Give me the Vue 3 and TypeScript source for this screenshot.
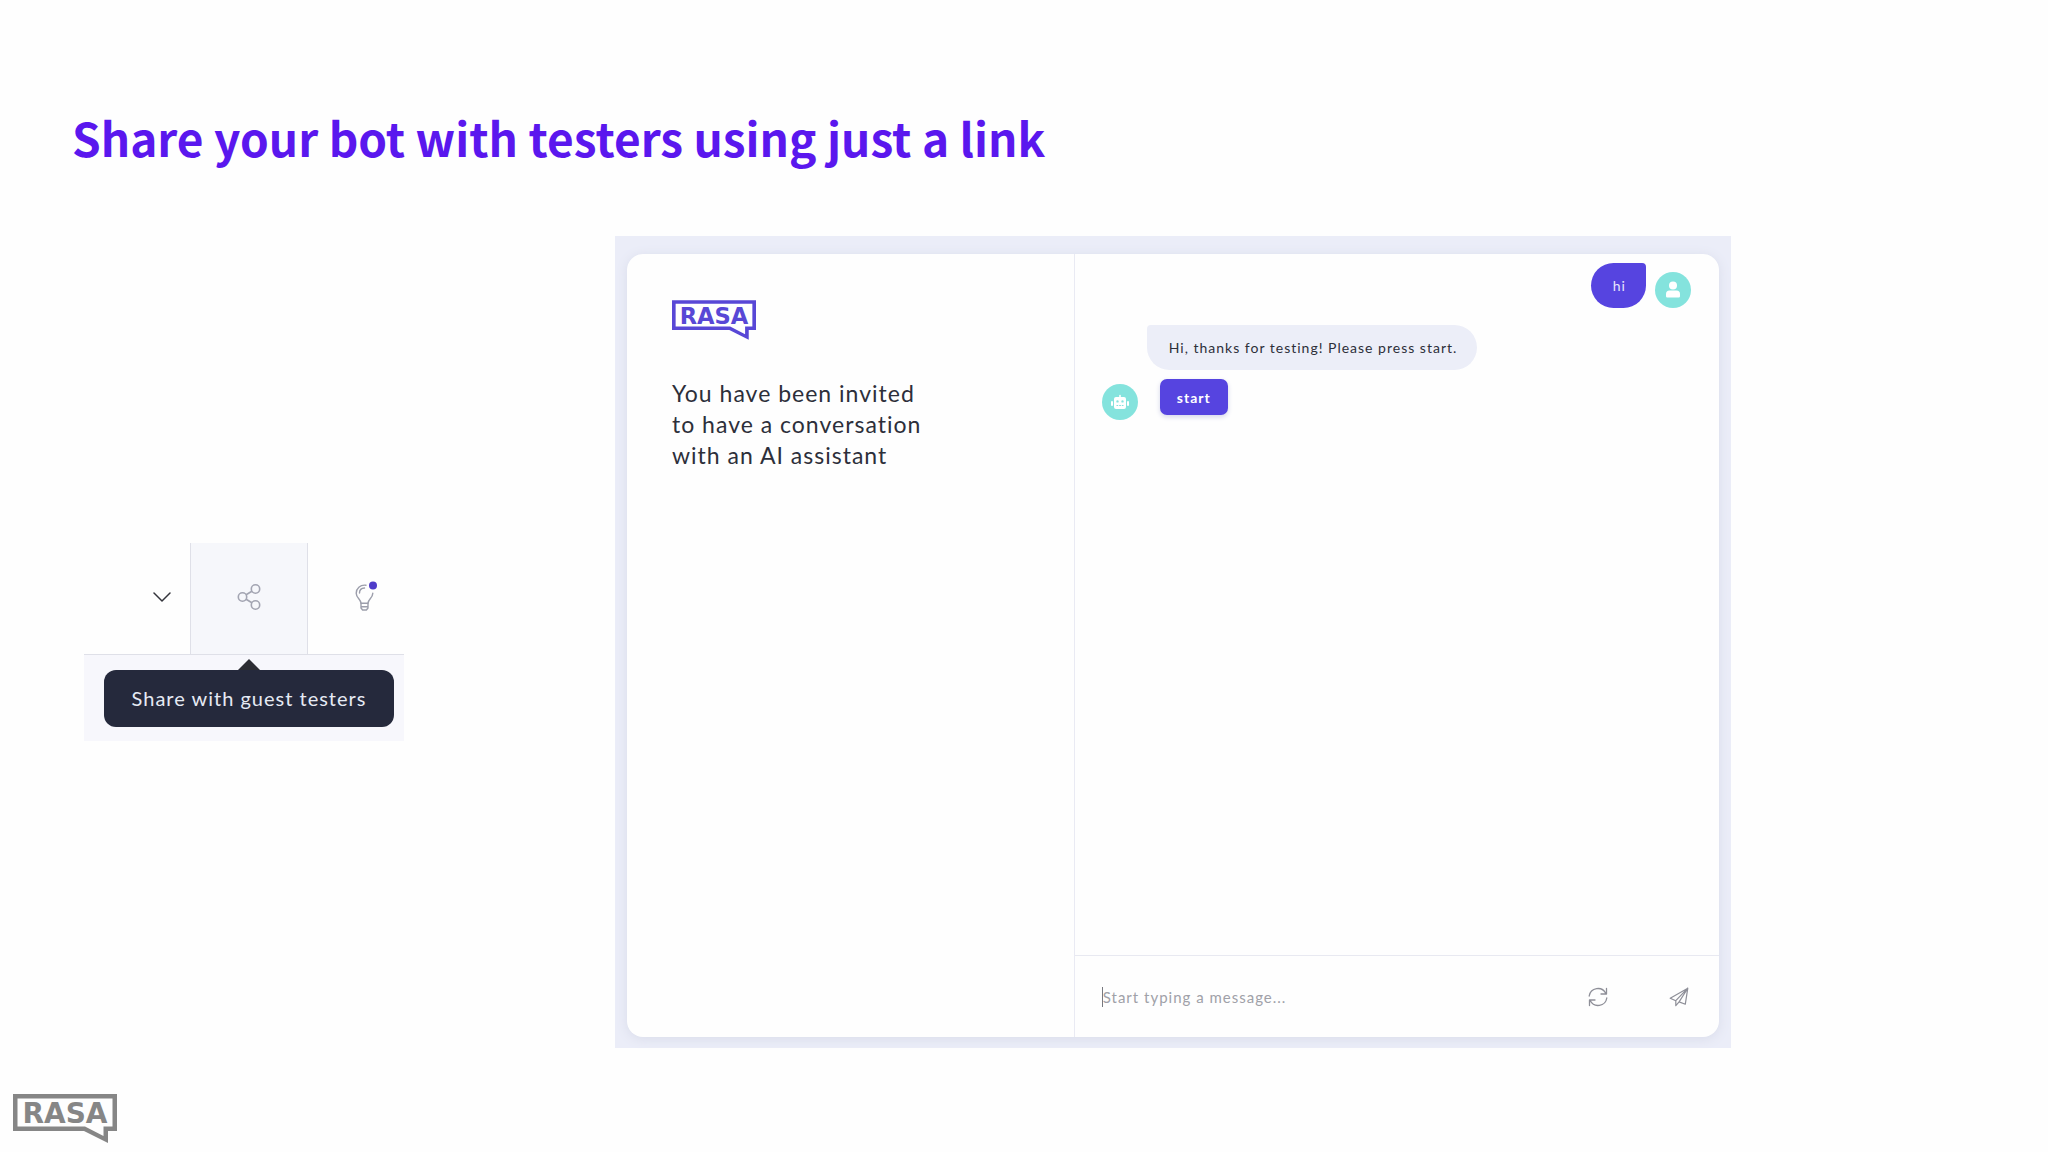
<script setup lang="ts">
import { ref } from 'vue'

interface ChatMessage {
  id: number
  from: 'guest' | 'bot'
  text: string
  replies: string[]
}

const title = 'Share your bot with testers using just a link'
const invitation = ['You have been invited', 'to have a conversation', 'with an AI assistant']
const draft = ref('')

const messages = ref<ChatMessage[]>([
  { id: 1, from: 'guest', text: 'hi', replies: [] },
  { id: 2, from: 'bot', text: 'Hi, thanks for testing! Please press start.', replies: ['start'] },
])
</script>

<template>
  <div class="page">
    <header class="heading">
      <h1>{{ title }}</h1>
    </header>

    <main class="content">
      <section class="toolbar" aria-label="Toolbar">
        <div class="tools">
          <button class="tool tool-more" type="button" aria-label="More">
            <svg width="18" height="10" viewBox="0 0 18 10" fill="none" stroke="#33343b" stroke-width="1.5" stroke-linecap="round" stroke-linejoin="round">
              <path d="M1 1l8 8 8-8" />
            </svg>
          </button>
          <button class="tool tool-share" type="button" aria-label="Share with guest testers">
            <svg width="24" height="28" viewBox="0 0 24 28" fill="none" stroke="#a3a5b2" stroke-width="1.6">
              <circle cx="5.5" cy="14" r="4.2" />
              <circle cx="18.5" cy="6" r="4.2" />
              <circle cx="18.5" cy="22" r="4.2" />
              <path d="M9.1 11.8l5.8-3.6M9.1 16.2l5.8 3.6" />
            </svg>
          </button>
          <button class="tool tool-tips" type="button" aria-label="Tips">
            <svg width="24" height="32" viewBox="0 0 24 32" fill="none" stroke="#9c9eab" stroke-width="1.4" stroke-linecap="round" stroke-linejoin="round">
              <path d="M12 4.200C6 3.500 2.200 7.500 2.200 12.200c0 4.800 4.800 6 4.800 10h7c0-4 4.800-5.200 4.800-10" />
              <path d="M5.500 12c0-2.800 1.800-4.800 5-5" />
              <path d="M7 22.200v4.800l1.600 2h3.800l1.600-2v-4.800M7 25.700h7" />
              <circle cx="19" cy="4.500" r="4" fill="#4f3cc9" stroke="none" />
            </svg>
          </button>
        </div>
        <div class="tip-area">
          <div class="tooltip" role="tooltip">Share with guest testers</div>
        </div>
      </section>

      <section class="preview">
        <div class="card">
          <aside class="intro">
            <svg class="logo" width="84" height="40" viewBox="0 0 104 49" role="img" aria-label="Rasa">
              <path fill-rule="evenodd" d="M0 0H104V37H95V49L71 37H0ZM4.500 4.500V32.500H72L90.500 42V32.500H99.500V4.500Z" />
              <text x="52" y="29" text-anchor="middle">RASA</text>
            </svg>
            <p class="invitation">
              <span v-for="line in invitation" :key="line">{{ line }}</span>
            </p>
          </aside>

          <div class="chat">
            <div class="messages">
              <div v-for="message in messages" :key="message.id" class="message" :class="message.from">
                <span class="avatar">
                  <svg v-if="message.from === 'guest'" width="16" height="18" viewBox="0 0 16 18" fill="#fff">
                    <circle cx="8" cy="4.500" r="4" />
                    <path d="M4.500 9.500h7A3.500 3.500 0 0 1 15 13v2.200a1.300 1.300 0 0 1-1.300 1.300H2.300A1.300 1.300 0 0 1 1 15.200V13a3.500 3.500 0 0 1 3.500-3.500z" />
                  </svg>
                  <svg v-else width="18" height="16" viewBox="0 0 18 16" fill="#fff">
                    <path fill-rule="evenodd" d="M8.200 1.500a.8.800 0 0 1 1.600 0V3H13a2 2 0 0 1 2 2v8a2 2 0 0 1-2 2H5a2 2 0 0 1-2-2V5a2 2 0 0 1 2-2h3.200zM6.500 6.200a1.200 1.200 0 1 0 0 2.400 1.200 1.200 0 0 0 0-2.400zm5 0a1.200 1.200 0 1 0 0 2.400 1.200 1.200 0 0 0 0-2.400zM5.500 11v1h1.700v-1zm2.700 0v1h1.700v-1zm2.600 0v1h1.700v-1z" />
                    <rect x="0" y="7" width="2" height="5" rx="1" />
                    <rect x="16" y="7" width="2" height="5" rx="1" />
                  </svg>
                </span>
                <div class="body">
                  <p class="bubble">{{ message.text }}</p>
                  <button v-for="reply in message.replies" :key="reply" class="reply" type="button">{{ reply }}</button>
                </div>
              </div>
            </div>

            <form class="compose" @submit.prevent>
              <span class="caret" aria-hidden="true"></span>
              <input v-model="draft" type="text" placeholder="Start typing a message..." aria-label="Message" />
              <button class="action" type="button" aria-label="Restart conversation">
                <svg width="20" height="20" viewBox="0 0 20 20" fill="none" stroke="#8e8f98" stroke-width="1.300" stroke-linecap="round" stroke-linejoin="round">
                  <path d="M1.200 9A8.800 8.800 0 0 1 17.800 6.500M18.500 1.500V7H13" />
                  <path d="M18.800 11A8.800 8.800 0 0 1 2.200 13.500M1.500 18.500V13H7" />
                </svg>
              </button>
              <button class="action" type="submit" aria-label="Send">
                <svg width="20" height="20" viewBox="0 0 20 20" fill="none" stroke="#8e8f98" stroke-width="1.200" stroke-linecap="round" stroke-linejoin="round">
                  <path d="M18.800 1.200L1.200 11.200l5.600 2.500L18.800 1.200l-2.500 16-6.200-2.300M6.800 13.700v5l3.300-3.800M18.800 1.200L10.100 14.900" />
                </svg>
              </button>
            </form>
          </div>
        </div>
      </section>
    </main>

    <footer class="foot">
      <svg class="logo logo-muted" width="104" height="49" viewBox="0 0 104 49" role="img" aria-label="Rasa">
        <path fill-rule="evenodd" d="M0 0H104V37H95V49L71 37H0ZM4.500 4.500V32.500H72L90.500 42V32.500H99.500V4.500Z" />
        <text x="52" y="29" text-anchor="middle">RASA</text>
      </svg>
    </footer>
  </div>
</template>

<style>
body {
  margin: 0;
  background: #fefefe;
}
</style>

<style scoped>
.page {
  display: flex;
  flex-direction: column;
  min-height: 100vh;
  font-family: Lato, "Liberation Sans", sans-serif;
  color: #2d2f3a;
}

button {
  display: flex;
  align-items: center;
  justify-content: center;
  padding: 0;
  border: 0;
  background: none;
  font: inherit;
  cursor: pointer;
}

.heading {
  box-sizing: border-box;
  height: 236px;
  padding: 101px 72px 0;
}

h1 {
  margin: 0;
  font: 700 46px/72px "Noto Sans CJK SC", "Noto Sans", sans-serif;
  color: #5a17ee;
}

.content {
  display: flex;
  flex: 1;
  align-items: center;
  gap: 211px;
  padding: 0 317px 0 84px;
}

.toolbar {
  flex: none;
  width: 320px;
}

.tools {
  display: flex;
  height: 111px;
  border-bottom: 1px solid #dfe0e8;
}

.tool {
  padding-bottom: 3px;
}

.tool-more {
  width: 106px;
  justify-content: flex-end;
  padding-right: 19px;
}

.tool-share {
  width: 118px;
  border: solid #dfe0e8;
  border-width: 0 1px;
  background: #f6f7fb;
}

.tool-tips {
  flex: 1;
  padding-left: 20px;
}

.tip-area {
  padding: 15px 10px 14px 20px;
  background: #f7f7fc;
}

.tooltip {
  position: relative;
  border-radius: 12px;
  background: #25293c;
  font-size: 20px;
  line-height: 57px;
  letter-spacing: 1px;
  text-align: center;
  color: #e6eaf4;
}

.tooltip::before {
  content: "";
  position: absolute;
  bottom: 100%;
  left: 50%;
  margin-left: -11px;
  border: 11px solid transparent;
  border-top-width: 0;
  border-bottom-color: #2c2d33;
}

.preview {
  display: flex;
  flex: 1;
  align-self: stretch;
  padding: 18px 12px 11px;
  background: #ebedf8;
}

.card {
  display: grid;
  flex: 1;
  grid-template-columns: 41% 1fr;
  border-radius: 16px;
  background: #fefefe;
  box-shadow: 0 2px 12px #d9dcea;
}

.intro {
  padding: 46px 45px;
  border-right: 1px solid #e9eaf3;
}

.logo {
  display: block;
  fill: #5847d6;
}

.logo-muted {
  fill: #868686;
}

.logo text {
  font: 700 28px "DejaVu Sans", sans-serif;
}

.invitation {
  margin: 38px 0 0;
  font-size: 23px;
  line-height: 31px;
  letter-spacing: 1px;
}

.invitation span {
  display: block;
}

.chat {
  display: flex;
  flex-direction: column;
}

.messages {
  display: flex;
  flex: 1;
  flex-direction: column;
  gap: 17px;
  padding: 9px 28px 0 27px;
}

.message {
  display: flex;
  align-items: flex-end;
  gap: 9px;
}

.guest {
  flex-direction: row-reverse;
}

.avatar {
  display: flex;
  align-items: center;
  justify-content: center;
  width: 36px;
  height: 36px;
  border-radius: 50%;
  background: #84e3dd;
}

.bubble {
  margin: 0;
  padding: 0 20px 0 22px;
  border-radius: 4px 23px 23px 23px;
  background: #eceef8;
  font-size: 14px;
  line-height: 45px;
  letter-spacing: 1px;
}

.guest .bubble {
  border-radius: 23px 4px 23px 23px;
  background: #5644e0;
  color: #e8e6fb;
}

.bot .body {
  padding-bottom: 5px;
}

.reply {
  width: 68px;
  height: 36px;
  margin: 9px 0 0 13px;
  border-radius: 7px;
  background: #5644e0;
  box-shadow: 0 2px 5px #d5d6ea;
  font-size: 14px;
  font-weight: 700;
  letter-spacing: 1px;
  color: #fff;
}

.compose {
  display: flex;
  align-items: center;
  height: 81px;
  padding: 0 30px 0 27px;
  border-top: 1px solid #e8e9f1;
}

.caret {
  width: 1px;
  height: 20px;
  background: #77787f;
}

input {
  flex: 1;
  min-width: 0;
  padding: 0;
  border: 0;
  outline: 0;
  background: none;
  font: inherit;
  font-size: 15px;
  letter-spacing: 1px;
  color: #2d2f3a;
}

input::placeholder {
  color: #a0a1a8;
}

.action + .action {
  margin-left: 61px;
}

.foot {
  box-sizing: border-box;
  height: 104px;
  padding: 46px 13px 0;
}
</style>
